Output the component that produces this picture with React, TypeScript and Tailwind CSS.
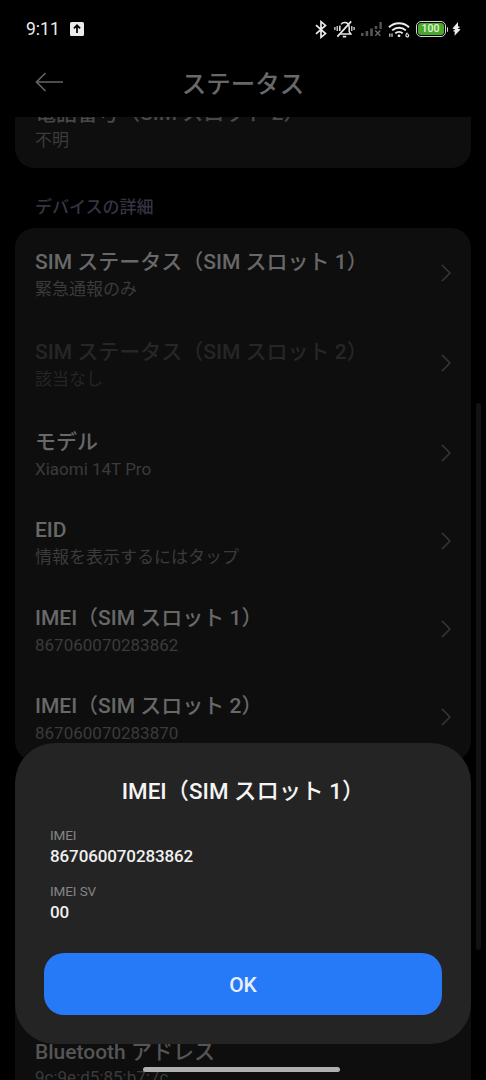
import clsx from 'clsx'

type Row = {
  title: string
  value: string
  height: string
  disabled?: boolean
}

const rows: Row[] = [
  { title: 'SIM ステータス（SIM スロット 1）', value: '緊急通報のみ', height: 'h-[90px]' },
  { title: 'SIM ステータス（SIM スロット 2）', value: '該当なし', height: 'h-[90px]', disabled: true },
  { title: 'モデル', value: 'Xiaomi 14T Pro', height: 'h-[89px]' },
  { title: 'EID', value: '情報を表示するにはタップ', height: 'h-[87px]' },
  { title: 'IMEI（SIM スロット 1）', value: '867060070283862', height: 'h-[89px]' },
  { title: 'IMEI（SIM スロット 2）', value: '867060070283870', height: 'h-[88px]' },
]

function StatusBar() {
  return (
    <header className="flex h-[58px] shrink-0 items-center pr-[25px] pl-[26px] text-[#ececec]">
      <span className="w-[35px] pt-px text-[17.5px] leading-none">9:11</span>
      <svg className="ml-[9px]" width="14" height="14" viewBox="0 0 14 14">
        <rect width="14" height="14" rx="1.5" fill="#ececec" />
        <path d="M7 11V3.6M3.9 6.4 7 3.3l3.1 3.1" fill="none" stroke="#000" strokeWidth="1.7" />
      </svg>

      <svg className="ml-auto" width="12" height="19" viewBox="0 0 12 19" fill="none" stroke="currentColor" strokeWidth="1.7">
        <path d="M1 5.2 10.5 13.6 6 17.3V1.7l4.5 3.7L1 13.8" />
      </svg>
      <svg className="ml-[7px]" width="21" height="19" viewBox="0 0 21 19" fill="none" stroke="currentColor" strokeWidth="1.5">
        <path d="M7.2 4.4C8 3.2 9 2.6 10.5 2.6c3 0 4.7 2.2 4.7 5v4.2l1.6 2.2H6.5M5.8 11V7.6c0-.8.1-1.4.4-2" />
        <path d="M8.8 16.6h3.4M17.2 1.4 3.4 16.6" strokeWidth="1.7" />
        <path d="M3.2 6v5M.9 7v3M17.8 6v5M20.1 7v3" strokeWidth="1.2" />
      </svg>
      <svg className="ml-[6px]" width="21" height="15" viewBox="0 0 21 15" fill="#555">
        <rect x="0" y="11" width="2.6" height="3" />
        <rect x="4.6" y="9" width="2.6" height="5" />
        <rect x="9.2" y="6.5" width="2.6" height="7.5" />
        <rect x="13.8" y="4" width="2.4" height="3" />
        <rect x="18.4" y="0" width="2.4" height="7" />
        <path d="m14.3 8.6 5 5.2M19.3 8.6l-5 5.2" stroke="#666" strokeWidth="1.4" />
      </svg>
      <svg className="ml-[6px]" width="22" height="17" viewBox="0 0 22 17" fill="none" stroke="currentColor" strokeWidth="2">
        <path d="M1 6.2c5.6-5.4 14.4-5.4 20 0M4.2 9.4c3.8-3.7 9.8-3.7 13.6 0M7.3 12.4c2.1-2 5.3-2 7.4 0" />
        <circle cx="11" cy="14.8" r="1.4" fill="currentColor" stroke="none" />
        <path d="M1.8 12.5v3.3M4 12.5v3.3" strokeWidth="1.1" />
        <path d="M19.4 11.8c-1 .8-1.5 1.7-1.5 2.6a1.4 1.4 0 1 0 1.4-1.3" strokeWidth="1.1" />
      </svg>
      <div className="ml-[6px] flex items-center">
        <div className="flex h-[16px] w-[30px] rounded-[5px] border-[1.5px] border-[#d5d5d5] p-px">
          <div className="flex flex-1 items-center justify-center rounded-[3px] bg-[#49a82b] pt-px text-[10.5px] leading-none font-medium text-[#e4f5df]">
            100
          </div>
        </div>
        <div className="ml-px h-[5px] w-[1.5px] rounded-r bg-[#d5d5d5]" />
      </div>
      <svg className="ml-[4px]" width="9" height="14" viewBox="0 0 9 14" fill="currentColor">
        <path d="M6 0 .4 6.6l3 .9L.8 9l2 .7-.3 4.1 6-6.4-3-.9L8.3 5 6 4.2z" />
      </svg>
    </header>
  )
}

function Chevron() {
  return (
    <svg width="10" height="18" viewBox="0 0 10 18" fill="none" stroke="#383838" strokeWidth="1.5">
      <path d="m1 1 8 8-8 8" />
    </svg>
  )
}

function SettingRow({ title, value, height, disabled }: Row) {
  return (
    <div className={clsx('flex shrink-0 items-center justify-between pr-[20px] pl-[20px]', height)}>
      <div className="pt-[4px] whitespace-nowrap">
        <div
          className={clsx(
            'text-[21px] leading-[29px] font-medium',
            disabled ? 'text-[#262626]' : 'text-[#686868]'
          )}
        >
          {title}
        </div>
        <div className={clsx('text-[17px] leading-[25px]', disabled ? 'text-[#252525]' : 'text-[#3b3b3b]')}>
          {value}
        </div>
      </div>
      <Chevron />
    </div>
  )
}

function ImeiDialog() {
  return (
    <div
      role="dialog"
      className="absolute top-[743px] left-[15px] flex h-[301px] w-[456px] flex-col rounded-[40px] bg-[#242424] px-[29px] pt-[32px]"
    >
      <h2 className="text-center text-[22.4px] leading-[32px] font-medium whitespace-nowrap text-[#f4f4f4]">
        IMEI（SIM スロット 1）
      </h2>
      <dl className="mt-[18px] pl-[6px]">
        <dt className="text-[13.5px] leading-[20px] tracking-[-0.1px] text-[#858585]">IMEI</dt>
        <dd className="text-[17px] leading-[23px] font-medium tracking-[-0.12px] text-[#f0f0f0]">867060070283862</dd>
        <dt className="mt-[13px] text-[13.5px] leading-[20px] tracking-[-0.1px] text-[#858585]">IMEI SV</dt>
        <dd className="text-[17px] leading-[23px] font-medium tracking-[-0.12px] text-[#f0f0f0]">00</dd>
      </dl>
      <button
        type="button"
        className="mt-[29px] h-[62px] rounded-[20px] bg-[#277af7] pt-[3px] text-[21px] font-medium text-[#e6f0ff]"
      >
        OK
      </button>
    </div>
  )
}

export default function App() {
  return (
    <div
      lang="ja"
      className="relative flex h-[1080px] w-[486px] flex-col overflow-hidden bg-black font-[Roboto,'Noto_Sans_CJK_JP',sans-serif]"
    >
      <StatusBar />

      <div className="flex h-[59px] shrink-0 items-start px-[35px] pt-[7px]">
        <svg className="mt-[7px] shrink-0" width="28" height="20" viewBox="0 0 28 20" fill="none" stroke="#646464" strokeWidth="1.6">
          <path d="M28 10H1.5M10.5 1 1.5 10l9 9" />
        </svg>
        <h1 className="mt-[2px] mr-[28px] flex-1 text-center text-[24.5px] leading-[36px] font-medium text-[#686868]">
          ステータス
        </h1>
      </div>

      <main className="flex min-h-0 flex-1 flex-col overflow-hidden px-[15px]">
        <section className="flex h-[51px] shrink-0 flex-col justify-end overflow-hidden rounded-b-[20px] bg-[#0e0e0e] px-[20px] pb-[15px]">
          <div className="text-[21px] leading-[29px] font-medium text-[#484848]">電話番号（SIM スロット 2）</div>
          <div className="text-[17px] leading-[25px] text-[#3b3b3b]">不明</div>
        </section>

        <h3 className="mt-[26px] ml-[20px] text-[17px] leading-[26px] font-medium text-[#363443]">
          デバイスの詳細
        </h3>

        <section className="mt-[8px] shrink-0 rounded-[20px] bg-[#0e0e0e]">
          {rows.map((row) => (
            <SettingRow key={row.title} {...row} />
          ))}
        </section>

        <section className="mt-[60px] shrink-0 rounded-t-[20px] bg-[#0e0e0e] px-[20px] pt-[217px]">
          <div className="text-[21px] leading-[29px] font-medium text-[#555]">Bluetooth アドレス</div>
          <div className="-mt-[2px] text-[17px] leading-[25px] text-[#3b3b3b]">9c:9e:d5:85:b7:7c</div>
        </section>
      </main>

      <div className="absolute top-[403px] left-[476px] h-[547px] w-[5px] rounded-full bg-[#121212]" />
      <ImeiDialog />
      <div className="absolute top-[1067px] left-[143px] h-[5px] w-[197px] rounded-full bg-[#b0b0b0]" />
    </div>
  )
}
